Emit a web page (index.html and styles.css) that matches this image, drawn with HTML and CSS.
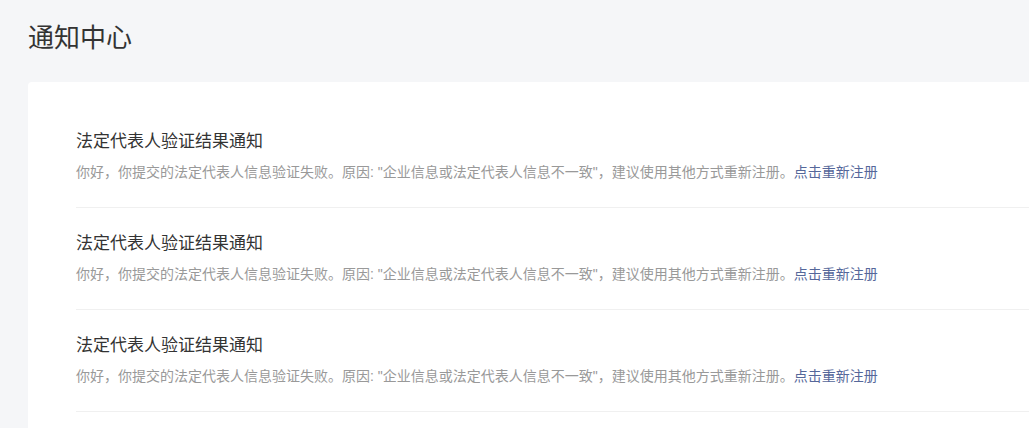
FILE: index.html
```html
<!DOCTYPE html>
<html lang="zh-CN">
<head>
  <meta charset="UTF-8" />
  <meta name="viewport" content="width=device-width, initial-scale=1.0"/>
  <title>通知中心</title>
  <link rel="stylesheet" href="styles.css">
</head>
<body>
  <h1 class="page-title">通知中心</h1>

  <div class="card">
    <ul class="notice-list">
      <li class="notice">
        <p class="notice-title">法定代表人验证结果通知</p>
        <p class="notice-desc">你好，你提交的法定代表人信息验证失败。原因: "企业信息或法定代表人信息不一致"，建议使用其他方式重新注册。<a href="#" class="notice-link">点击重新注册</a></p>
      </li>
      <li class="notice">
        <p class="notice-title">法定代表人验证结果通知</p>
        <p class="notice-desc">你好，你提交的法定代表人信息验证失败。原因: "企业信息或法定代表人信息不一致"，建议使用其他方式重新注册。<a href="#" class="notice-link">点击重新注册</a></p>
      </li>
      <li class="notice">
        <p class="notice-title">法定代表人验证结果通知</p>
        <p class="notice-desc">你好，你提交的法定代表人信息验证失败。原因: "企业信息或法定代表人信息不一致"，建议使用其他方式重新注册。<a href="#" class="notice-link">点击重新注册</a></p>
      </li>
    </ul>
  </div>
</body>
</html>
```

FILE: styles.css
```css
body {
  margin: 0;
  padding: 0 0 0 28px;
  background: #f5f6f8;
  font-family: "Liberation Sans", "Noto Sans CJK SC", sans-serif;
  color: #333;
  overflow: hidden;
}

.page-title {
  margin: 0;
  padding-top: 21px;
  height: 82px;
  box-sizing: border-box;
  font-size: 26px;
  line-height: 34px;
  font-weight: normal;
  color: #333;
}

.card {
  background: #fff;
  border-radius: 4px 0 0 0;
  padding: 24px 0 0 48px;
  min-height: 400px;
}

.notice-list {
  list-style: none;
  margin: 0;
  padding: 0;
}

.notice {
  padding: 24px 0 25px;
  border-bottom: 1px solid #f0f0f0;
}

.notice-title {
  margin: 0;
  font-size: 17px;
  line-height: 24px;
  color: #333;
}

.notice-desc {
  margin: 8px 0 0;
  font-size: 14px;
  line-height: 20px;
  color: #999;
  white-space: nowrap;
}

.notice-link {
  color: #55679a;
  text-decoration: none;
}
```
